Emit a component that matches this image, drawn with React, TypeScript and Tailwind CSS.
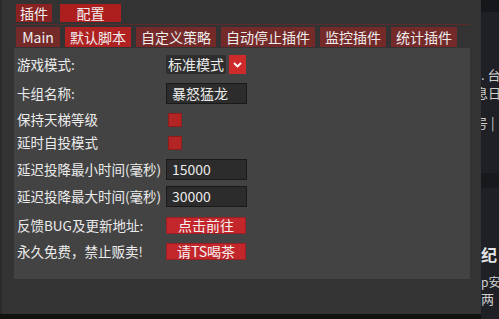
const topTabs = [
  { name: '插件', w: 'w-[36px]', active: false },
  { name: '配置', w: 'w-[61px]', active: true },
]

const subTabs = [
  { name: 'Main', active: false },
  { name: '默认脚本', active: true },
  { name: '自定义策略', active: false },
  { name: '自动停止插件', active: false },
  { name: '监控插件', active: false },
  { name: '统计插件', active: false },
]

function Row({ label, mt, children }: { label: string; mt: string; children: React.ReactNode }) {
  return (
    <div className={`flex items-center ${mt}`}>
      <div className="w-[152px] pl-[3px] text-[13.5px] leading-none text-[#ececec] whitespace-nowrap">{label}</div>
      {children}
    </div>
  )
}

function TextBox({ value }: { value: string }) {
  return (
    <div className="w-[81px] h-[21px] bg-[#2c2c2c] border border-[#1a1a1a] flex items-center px-[5px] text-[14px] text-[#eaeaea]">
      {value}
    </div>
  )
}

function Check() {
  return <div className="ml-[2px] w-[14px] h-[14px] bg-[#b52424] border border-[#8a1c1c]" />
}

function RedButton({ text }: { text: string }) {
  return (
    <div className="w-[80px] h-[17px] bg-[#c4272b] border border-[#962024] flex items-center justify-center text-[14px] text-[#f3f3f3]">
      {text}
    </div>
  )
}

export default function App() {
  return (
    <div
      className="flex w-[499px] h-[319px] overflow-hidden bg-[#111]"
      style={{ fontFamily: '"Noto Sans CJK SC", "Noto Sans", sans-serif' }}
    >
      {/* dialog */}
      <div className="w-[481px] h-[314px] bg-[#333333] pl-[12px] border-l-[2px] border-[#2a2a2a]">
        <div className="flex gap-[8px] pt-[4px] pl-[2px]">
          {topTabs.map((t) => (
            <div
              key={t.name}
              className={`${t.w} h-[18px] flex items-center justify-center text-[14px] text-[#f0f0f0] ${
                t.active ? 'bg-[#ad1f1f]' : 'bg-[#8a2222]'
              }`}
            >
              {t.name}
            </div>
          ))}
        </div>

        <div className="mt-[2px] w-[456px] border-t border-[#5a2b2b] pt-[2px] pl-[2px] flex gap-[5px]">
          {subTabs.map((t) => (
            <div
              key={t.name}
              className={`h-[20px] min-w-[44px] px-[5px] flex items-center justify-center text-[14px] text-[#eeeeee] ${
                t.active ? 'bg-[#b02222]' : 'bg-[#752a2a]'
              }`}
            >
              {t.name}
            </div>
          ))}
        </div>

        <div className="mt-[1px] w-[456px] h-[231px] bg-[#434343] flex flex-col">
          <Row label="游戏模式:" mt="mt-[7px]">
            <div className="flex items-center gap-[3px]">
              <div className="w-[60px] h-[19px] rounded-[2px] bg-[#2e2e2e] flex items-center pl-[2px] text-[14px] text-[#eaeaea]">
                标准模式
              </div>
              <div className="w-[17px] h-[19px] bg-[#cf2a2a] flex items-center justify-center">
                <svg width="9" height="6" viewBox="0 0 9 6">
                  <path d="M1 1l3.5 3.5L8 1" stroke="#fff" strokeWidth="1.8" fill="none" />
                </svg>
              </div>
            </div>
          </Row>
          <Row label="卡组名称:" mt="mt-[9px]">
            <TextBox value="暴怒猛龙" />
          </Row>
          <Row label="保持天梯等级" mt="mt-[9px]">
            <Check />
          </Row>
          <Row label="延时自投模式" mt="mt-[9px]">
            <Check />
          </Row>
          <Row label="延迟投降最小时间(毫秒)" mt="mt-[9px]">
            <TextBox value="15000" />
          </Row>
          <Row label="延迟投降最大时间(毫秒)" mt="mt-[6px]">
            <TextBox value="30000" />
          </Row>
          <Row label="反馈BUG及更新地址:" mt="mt-[10px]">
            <RedButton text="点击前往" />
          </Row>
          <Row label="永久免费，禁止贩卖!" mt="mt-[9px]">
            <RedButton text="请TS喝茶" />
          </Row>
        </div>
      </div>

      {/* background page peeking at the right edge */}
      <div className="w-[18px] h-[319px] bg-[#1e2025] overflow-hidden flex flex-col text-[#cfcfcf] whitespace-nowrap">
        <div className="h-[12px] bg-[#15171a]" />
        <div className="mt-[55px] h-[14px] flex items-center text-[13px] leading-none">.&nbsp;台</div>
        <div className="mt-[4px] h-[14px] flex items-center text-[13px] leading-none -ml-[6px]">息日</div>
        <div className="mt-[16px] h-[14px] flex items-center text-[13px] leading-none -ml-[6px]">号 |</div>
        <div className="mt-[44px] h-[15px] bg-[#17191d]" />
        <div className="mt-[58px] h-[16px] flex items-center text-[16px] font-bold leading-none text-[#e4e4e4]">纪</div>
        <div className="mt-[14px] h-[12px] flex items-center text-[12px] leading-none">p安</div>
        <div className="mt-[4px] h-[13px] flex items-center text-[13px] leading-none">两</div>
      </div>
    </div>
  )
}
